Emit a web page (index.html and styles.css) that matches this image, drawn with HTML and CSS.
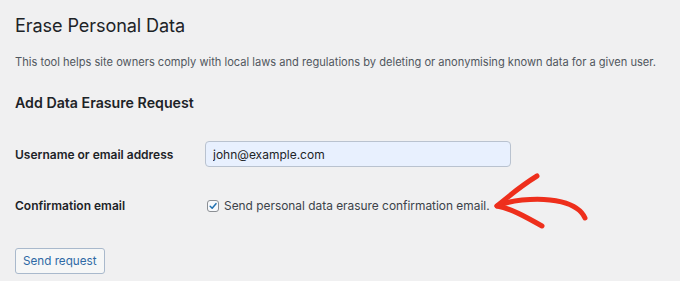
FILE: index.html
```html
<!DOCTYPE html>
<html lang="en">
<head>
<meta charset="utf-8">
<title>Erase Personal Data</title>
<link rel="stylesheet" href="styles.css">
</head>
<body>
<div class="wrap">
  <h1 class="title">Erase Personal Data</h1>
  <p class="intro">This tool helps site owners comply with local laws and regulations by deleting or anonymising known data for a given user.</p>
  <h2 class="subtitle">Add Data Erasure Request</h2>
  <form class="form">
    <div class="row row-user">
      <label class="label" for="user">Username or email address</label>
      <input class="field" id="user" type="text" value="john@example.com">
    </div>
    <div class="row row-confirm">
      <span class="label">Confirmation email</span>
      <label class="check">
        <span class="box"><svg viewBox="0 0 12 12" width="12" height="12"><path d="M2.6 6.3 L5 8.7 L9.6 3.2" fill="none" stroke="#2271b1" stroke-width="1.8" stroke-linecap="round" stroke-linejoin="round"/></svg></span>
        <span class="check-text">Send personal data erasure confirmation email.</span>
      </label>
    </div>
    <div class="actions">
      <button class="button" type="button">Send request</button>
    </div>
  </form>
  <svg class="arrow" viewBox="0 0 120 70" width="120" height="70">
    <path d="M95 48 C88 32 60 27 32 30 C22 31 14 33 7 36" fill="none" stroke="#ee2f1c" stroke-width="5" stroke-linecap="round"/>
    <path d="M47 6 C34 14 20 25 7 36 C20 38 36 47 52 56" fill="none" stroke="#ee2f1c" stroke-width="5" stroke-linecap="round" stroke-linejoin="round"/>
  </svg>
</div>
</body>
</html>
```
FILE: styles.css
```css
html, body {
  margin: 0;
  padding: 0;
  background: #f0f0f1;
}
body {
  font-family: Inter, "Noto Sans", sans-serif;
  color: #1d2327;
  width: 680px;
  height: 281px;
  overflow: hidden;
}
.wrap {
  position: relative;
  padding: 13px 0 0 15px;
}
.title {
  font-size: 18.1px;
  font-weight: 400;
  line-height: 24px;
  margin: 0;
  letter-spacing: -0.1px;
}
.intro {
  font-size: 11.1px;
  line-height: 16px;
  color: #50575e;
  margin: 17px 0 0;
}
.subtitle {
  font-size: 14.2px;
  font-weight: 600;
  line-height: 20px;
  margin: 23px 0 0;
}
.form {
  margin-top: 28px;
}
.row {
  display: flex;
  align-items: center;
}
.label {
  width: 190px;
  font-size: 12px;
  font-weight: 600;
  color: #1d2327;
}
.field {
  box-sizing: border-box;
  width: 306px;
  height: 26px;
  margin: 0;
  padding: 0 7px;
  border: 1px solid #b9c2cf;
  border-radius: 4px;
  background: #e8f0fe;
  font-family: Inter, "Noto Sans", sans-serif;
  font-size: 12px;
  color: #1d2327;
}
.row-confirm {
  margin-top: 31px;
}
.check {
  display: flex;
  align-items: center;
  gap: 5px;
  font-size: 11.9px;
  color: #3c434a;
  margin-left: 2px;
}
.box {
  box-sizing: border-box;
  width: 12px;
  height: 12px;
  border: 1px solid #8c8f94;
  border-radius: 3px;
  background: #f7f9fc;
  display: flex;
  align-items: center;
  justify-content: center;
}
.box svg {
  display: block;
}
.actions {
  margin-top: 35px;
}
.button {
  box-sizing: border-box;
  height: 26px;
  padding: 0 7px;
  border: 1px solid #a9b9cc;
  border-radius: 3px;
  background: #f6f7f7;
  color: #2f6aa5;
  font-family: Inter, "Noto Sans", sans-serif;
  font-size: 11.7px;
}
.arrow {
  position: absolute;
  left: 490px;
  top: 170px;
}
```
